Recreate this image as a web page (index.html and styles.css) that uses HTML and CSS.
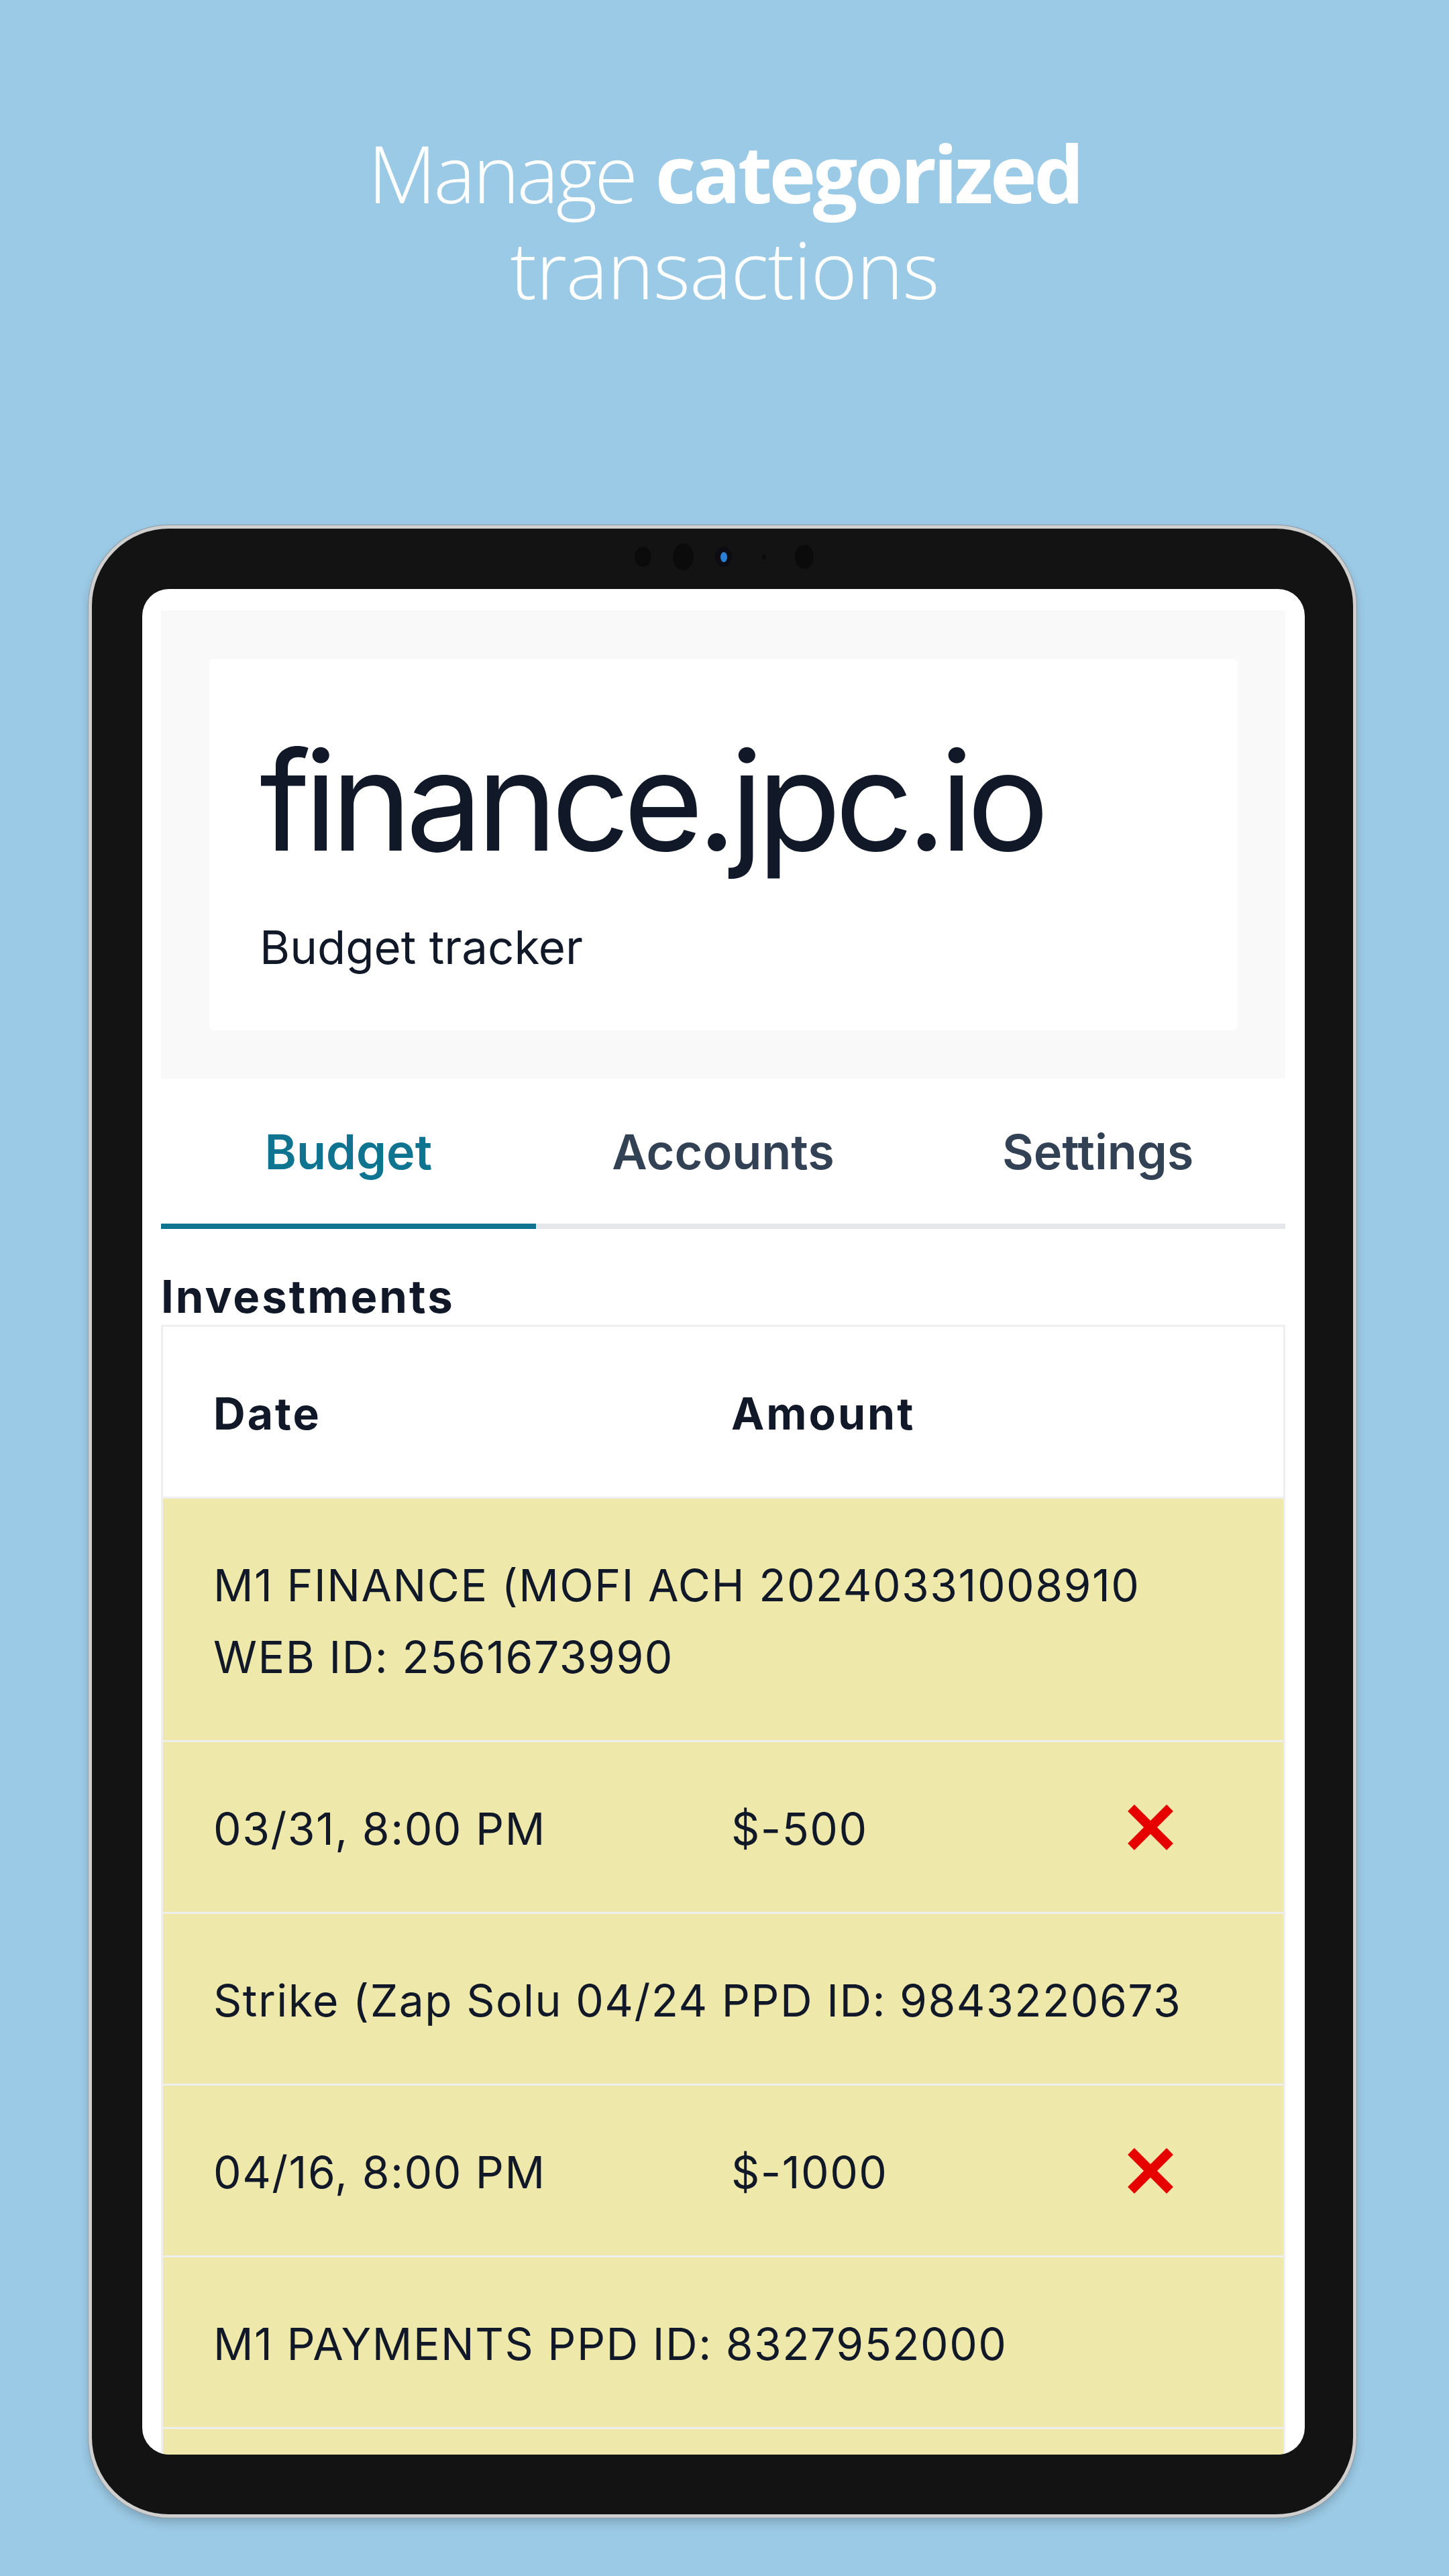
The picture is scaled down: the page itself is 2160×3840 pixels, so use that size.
FILE: index.html
```html
<!DOCTYPE html>
<html lang="en">
<head>
<meta charset="utf-8">
<title>finance.jpc.io — Manage categorized transactions</title>
<link rel="stylesheet" href="styles.css">
</head>
<body>
<header class="hero">
  <h1 class="hero-title"><span class="light">Manage</span> <strong>categorized</strong><br>transactions</h1>
</header>
<div class="device">
  <div class="sensors">
    <span class="sensor"><i class="dot dot-a"></i></span>
    <span class="sensor"><i class="dot dot-b"></i></span>
    <span class="sensor"><i class="dot dot-cam"><i class="lens"></i></i></span>
    <span class="sensor"><i class="dot dot-c"></i></span>
    <span class="sensor"><i class="dot dot-d"></i></span>
  </div>
  <div class="screen">
    <section class="masthead">
      <div class="brand-card">
        <h2 class="brand">finance.jpc.io</h2>
        <p class="tagline">Budget tracker</p>
      </div>
    </section>
    <nav class="tabs">
      <a class="tab active">Budget</a>
      <a class="tab">Accounts</a>
      <a class="tab">Settings</a>
    </nav>
    <h3 class="section-title">Investments</h3>
    <div class="txn-table">
      <div class="row head"><div class="cell">Date</div><div class="cell">Amount</div><div class="cell"></div></div>
      <div class="row desc"><div class="cell">M1 FINANCE (MOFI ACH 20240331008910 WEB ID: 2561673990</div></div>
      <div class="row"><div class="cell">03/31, 8:00 PM</div><div class="cell">$-500</div><div class="cell icon"><svg class="x" viewBox="0 0 70 70"><path d="M6 6 L64 64 M64 6 L6 64"/></svg></div></div>
      <div class="row desc"><div class="cell">Strike (Zap Solu 04/24 PPD ID: 9843220673</div></div>
      <div class="row"><div class="cell">04/16, 8:00 PM</div><div class="cell">$-1000</div><div class="cell icon"><svg class="x" viewBox="0 0 70 70"><path d="M6 6 L64 64 M64 6 L6 64"/></svg></div></div>
      <div class="row desc"><div class="cell">M1 PAYMENTS PPD ID: 8327952000</div></div>
      <div class="row"><div class="cell">&nbsp;</div><div class="cell"></div><div class="cell"></div></div>
    </div>
  </div>
</div>
</body>
</html>
```

FILE: styles.css
```css
* { box-sizing: border-box; }
html, body { margin: 0; padding: 0; }
body {
  width: 2160px;
  height: 3840px;
  overflow: hidden;
  background: #9bcae6;
  font-family: Inter, "Noto Sans", sans-serif;
}

.hero { padding-top: 186px; text-align: center; }
.hero-title {
  margin: 0;
  font-family: "Open Sans", "Noto Sans", sans-serif;
  font-weight: 300;
  font-size: 118px;
  line-height: 143px;
  letter-spacing: -1px;
  color: #ffffff;
}
.hero-title .light { letter-spacing: -4px; }
.hero-title strong { font-weight: 700; letter-spacing: -4.5px; }

.device {
  margin: 311px 0 0 132px;
  width: 1890px;
  height: 2970px;
  background: #131313;
  border: 5px solid #cfcfcf;
  border-radius: 120px;
  padding: 0 72px 89px 75px;
  display: flex;
  flex-direction: column;
  box-shadow: 0 0 0 1px #8e9ba4, 0 8px 14px rgba(0, 0, 0, 0.18);
}

.sensors {
  height: 90px;
  padding-bottom: 6px;
  display: flex;
  justify-content: center;
  align-items: center;
}
.sensor { width: 60px; display: flex; justify-content: center; align-items: center; }
.dot { display: block; border-radius: 50%; background: #0b0b0b; }
.dot-a { width: 25px; height: 30px; }
.dot-b { width: 31px; height: 40px; }
.dot-cam { width: 25px; height: 30px; background: #0c0c12; display: flex; justify-content: center; align-items: center; }
.lens { display: block; width: 10px; height: 15px; border-radius: 50%; background: #2b7fd6; }
.dot-c { width: 6px; height: 7px; }
.dot-d { width: 28px; height: 36px; }

.screen {
  flex: none;
  height: 2781px;
  background: #ffffff;
  border-radius: 40px;
  overflow: hidden;
  padding: 32px 29px 0 28px;
}

.masthead {
  background: #f9f9f9;
  padding: 72px 71px 72px 72px;
}
.brand-card {
  background: #ffffff;
  border-radius: 8px;
  padding: 109px 75px 72px;
}
.brand {
  margin: 0;
  font-size: 205px;
  line-height: 205px;
  font-weight: 400;
  letter-spacing: -0.047em;
  color: #111827;
}
.tagline {
  margin: 65px 0 0;
  font-size: 69px;
  line-height: 103px;
  color: #111827;
}

.tabs {
  display: grid;
  grid-template-columns: repeat(3, 1fr);
  border-bottom: 8px solid #e5e7eb;
}
.tab {
  padding: 55px 0 53px;
  margin-bottom: -8px;
  border-bottom: 8px solid transparent;
  text-align: center;
  font-size: 72px;
  line-height: 108px;
  font-weight: 600;
  color: #334155;
}
.tab.active { color: #0e7490; border-bottom-color: #0e7490; }

.section-title {
  margin: 61px 0 2px;
  font-size: 67px;
  line-height: 80px;
  font-weight: 700;
  letter-spacing: 3px;
  color: #111827;
}

.txn-table {
  border: 3px solid #eeeeee;
  border-bottom: none;
}
.row {
  display: grid;
  grid-template-columns: 772px 590px 1fr;
  background: #eee8aa;
  border-bottom: 3px solid #eeeeee;
  font-size: 66px;
  line-height: 107px;
  letter-spacing: 1.5px;
  color: #111827;
}
.row.head { background: #ffffff; font-weight: 700; letter-spacing: 3px; }
.row.desc { grid-template-columns: 1fr; }
.cell { padding: 76px 75px 70px; }
.cell.icon { display: flex; align-items: center; padding-top: 73px; padding-bottom: 73px; }
.x { width: 70px; height: 70px; display: block; }
.x path { stroke: #e60000; stroke-width: 14; fill: none; }
```
